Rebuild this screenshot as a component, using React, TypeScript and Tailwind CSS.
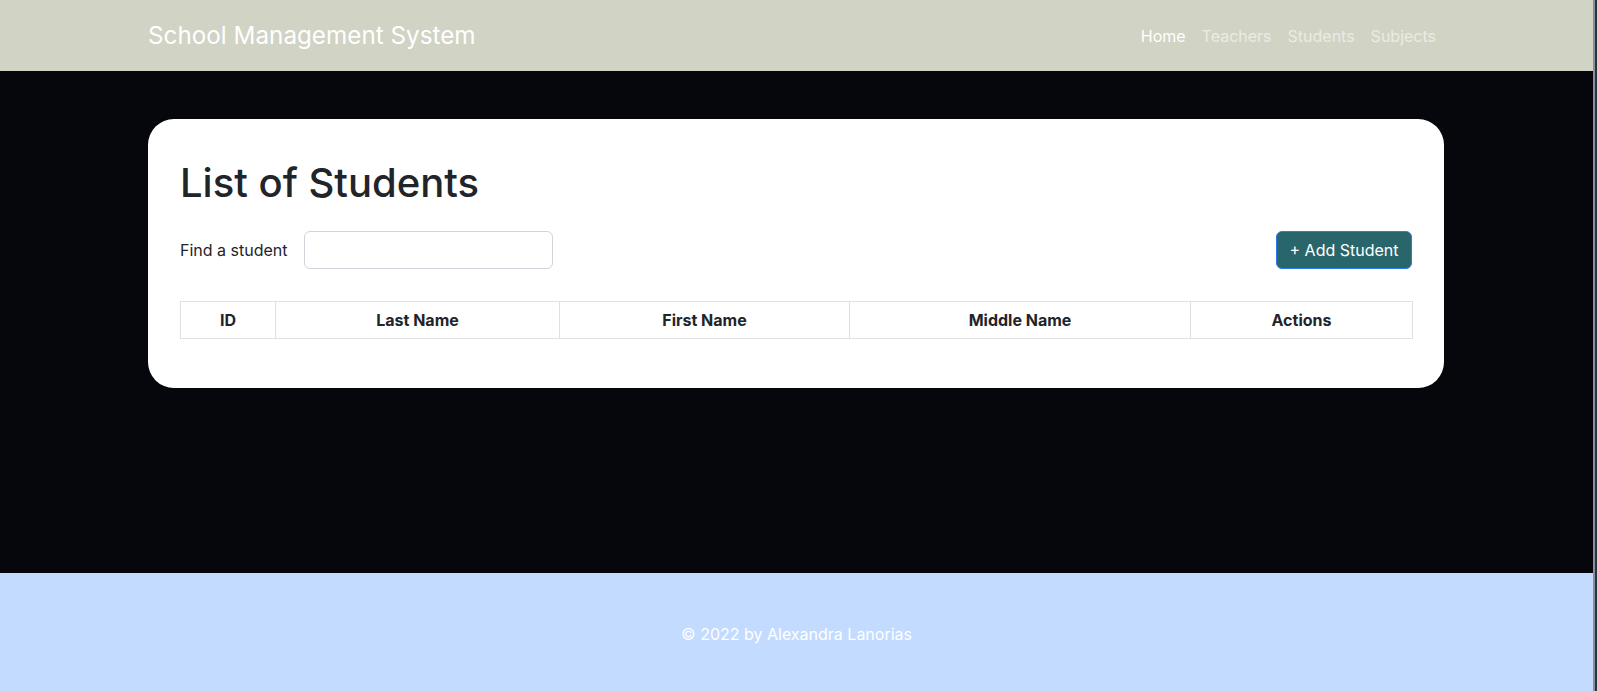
import React from "react";

const navLinks = [
  { label: "Home", active: true },
  { label: "Teachers", active: false },
  { label: "Students", active: false },
  { label: "Subjects", active: false },
];

const columns = [
  { label: "ID", width: "w-[95px]" },
  { label: "Last Name", width: "w-[284px]" },
  { label: "First Name", width: "w-[290px]" },
  { label: "Middle Name", width: "w-[341px]" },
  { label: "Actions", width: "w-[222px]" },
];

const Navbar: React.FC = () => {
  return (
    <nav className="h-[71px] bg-[#d1d3c4]">
      <div className="ml-[148px] flex h-full w-[1296px] items-center justify-between">
        <a className="text-[24.25px] leading-8 text-white">School Management System</a>
        <ul className="flex items-center">
          {navLinks.map((link) => (
            <li key={link.label}>
              <a
                className={
                  link.active
                    ? "block px-2 text-base leading-6 text-white"
                    : "block px-2 text-base leading-6 text-white/55"
                }
              >
                {link.label}
              </a>
            </li>
          ))}
        </ul>
      </div>
    </nav>
  );
};

const StudentsCard: React.FC = () => {
  return (
    <div className="ml-[148px] w-[1296px] rounded-[26px] bg-white px-8 pt-[40px] pb-[49px] text-[#212529]">
      <h1 className="text-[40px] font-medium leading-[48px]">List of Students</h1>
      <div className="mt-[24px] flex items-center justify-between">
        <div className="flex items-center">
          <label className="text-base leading-6">Find a student</label>
          <input
            type="text"
            className="ml-4 h-[38px] w-[249px] rounded-md border border-[#ced4da] bg-white px-3 text-base outline-none"
          />
        </div>
        <button className="h-[38px] w-[136px] rounded-md border border-[#2f7ae8] bg-[#29666b] text-base leading-6 text-white">
          + Add Student
        </button>
      </div>
      <table className="mt-[32px] w-full table-fixed border-collapse">
        <thead>
          <tr>
            {columns.map((col) => (
              <th
                key={col.label}
                className={`${col.width} border border-[#dee2e6] py-[6px] text-center text-base font-bold leading-6`}
              >
                {col.label}
              </th>
            ))}
          </tr>
        </thead>
        <tbody />
      </table>
    </div>
  );
};

export default function App() {
  return (
    <div className="flex h-[691px] w-[1597px] overflow-hidden font-['Inter',sans-serif]">
      <div className="flex w-[1593px] flex-col">
        <Navbar />
        <main className="h-[502px] bg-[#05070c] pt-[48px]">
          <StudentsCard />
        </main>
        <footer className="h-[118px] bg-[#c2dbfe] pt-[49px] text-center text-base leading-6 text-white">
          © 2022 by Alexandra Lanorias
        </footer>
      </div>
      <div className="w-[2px] bg-[#8a9199]" />
      <div className="w-[2px] bg-[#2b3440]" />
    </div>
  );
}
